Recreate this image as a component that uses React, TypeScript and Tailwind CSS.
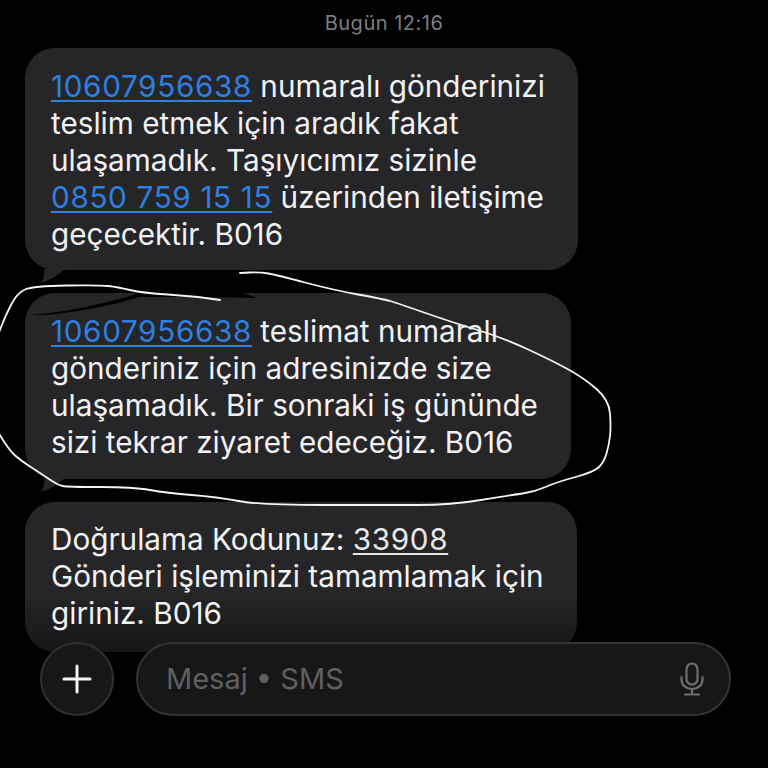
const FONT = "font-['Inter','Liberation_Sans',sans-serif]";

function Link({ children, color = "text-[#2f7fe0]" }: { children: React.ReactNode; color?: string }) {
  return (
    <span className={`${color} tracking-[0.65px] underline decoration-2 underline-offset-[3px]`}>
      {children}
    </span>
  );
}

function Tail({ className }: { className: string }) {
  return (
    <svg className={className} width="40" height="20" viewBox="0 0 40 20">
      <path d="M9 0 C10 5 9 10 5 14 C14 12 22 7 30 0 Z" fill="#262628" />
    </svg>
  );
}

// rounds off a hand traced line through its midpoints
function smooth(points: number[][]) {
  let d = `M${points[0][0]} ${points[0][1]}`;
  for (let i = 1; i < points.length - 1; i++) {
    const [x, y] = points[i];
    const [nx, ny] = points[i + 1];
    d += ` Q${x} ${y} ${(x + nx) / 2} ${(y + ny) / 2}`;
  }
  const last = points[points.length - 1];
  return `${d} L${last[0]} ${last[1]}`;
}

const topLeft = [
  [220, 300], [193, 296], [143, 293], [117, 287], [100, 285], [33, 286], [17, 293], [5, 317], [-2, 335],
];

const rest = [
  [-2, 432], [8, 449], [20, 460], [43, 475], [58, 485], [67, 487], [133, 487], [167, 493], [217, 497], [260, 505],
  [384, 505], [451, 505], [511, 495], [534, 492], [557, 482], [594, 472], [604, 462], [609, 445], [611, 427],
  [609, 400], [584, 378], [551, 360], [501, 337], [451, 322], [397, 303], [383, 299], [333, 290], [277, 275],
  [260, 272], [240, 273],
];

// the hand drawn circle over the second message
function Scribble() {
  return (
    <svg className="absolute left-0 top-0" width="768" height="768" viewBox="0 0 768 768" fill="none">
      <path
        d="M30 315 C60 313 100 305 133 295 L140 292 L240 292 L258 298 L200 297 L140 297 C110 306 60 316 30 315 Z"
        fill="#000"
      />
      <path d={smooth(topLeft)} stroke="#f4f4f4" strokeWidth="1.8" strokeLinecap="round" strokeLinejoin="round" />
      <path d={smooth(rest)} stroke="#f4f4f4" strokeWidth="1.8" strokeLinecap="round" strokeLinejoin="round" />
    </svg>
  );
}

export default function App() {
  return (
    <div className={`${FONT} relative h-[768px] w-[768px] overflow-hidden bg-black text-[#f2f2f4]`}>
      <div className="pt-[13px] text-center text-[20px] leading-[20px] tracking-[0.5px] text-[#7d7d82]">Bugün 12:16</div>

      <div className="flex flex-col gap-[23px] pl-[25px] pt-[15px] text-[29.7px] leading-[37px]">
        <div className="relative h-[222px] w-[553px] rounded-[30px] bg-[#262628] pl-[26px] pt-[20px]">
          <p className="whitespace-nowrap">
            <Link>10607956638</Link> numaralı gönderinizi
            <br />
            teslim etmek için aradık fakat
            <br />
            ulaşamadık. Taşıyıcımız sizinle
            <br />
            <Link>0850 759 15 15</Link> üzerinden iletişime
            <br />
            geçecektir. B016
          </p>
          <Tail className="absolute left-[10px] top-[221px]" />
        </div>

        <div className="relative h-[186px] w-[546px] rounded-[30px] bg-[#262628] pl-[26px] pt-[20px]">
          <p className="whitespace-nowrap">
            <Link>10607956638</Link> teslimat numaralı
            <br />
            gönderiniz için adresinizde size
            <br />
            ulaşamadık. Bir sonraki iş gününde
            <br />
            sizi tekrar ziyaret edeceğiz. B016
          </p>
          <Tail className="absolute left-[10px] top-[185px]" />
        </div>

        <div className="h-[150px] w-[552px] rounded-[30px] bg-gradient-to-b from-[#262628] from-60% to-[#161618] pl-[26px] pt-[19px]">
          <p className="whitespace-nowrap">
            Doğrulama Kodunuz: <Link color="text-[#e6e6e8]">33908</Link>
            <br />
            Gönderi işleminizi tamamlamak için
            <br />
            giriniz. B016
          </p>
        </div>
      </div>

      {/* composer floats over the list */}
      <div className="absolute left-[40px] top-[642px] flex items-center gap-[22px]">
        <div className="flex h-[74px] w-[74px] items-center justify-center rounded-full border-2 border-[#303032] bg-[#171717]">
          <svg width="30" height="30" viewBox="0 0 30 30" stroke="#f4f4f4" strokeWidth="3" strokeLinecap="round">
            <path d="M15 2 V28 M2 15 H28" />
          </svg>
        </div>
        <div className="flex h-[74px] w-[595px] items-center justify-between rounded-full border-2 border-[#343436] bg-[#171717] pl-[28px] pr-[25px]">
          <span className="text-[29px] text-[#5f5f62]">Mesaj • SMS</span>
          <svg width="24" height="34" viewBox="0 0 24 34" fill="none" stroke="#6e6e70" strokeWidth="2.2" strokeLinecap="round">
            <rect x="6.5" y="1.5" width="11" height="21" rx="5.5" />
            <path d="M1.5 15 V17 C1.5 23 6 27 12 27 C18 27 22.5 23 22.5 17 V15 M12 27 V32.5 M5 32.5 H19" />
          </svg>
        </div>
      </div>

      <Scribble />
    </div>
  );
}
